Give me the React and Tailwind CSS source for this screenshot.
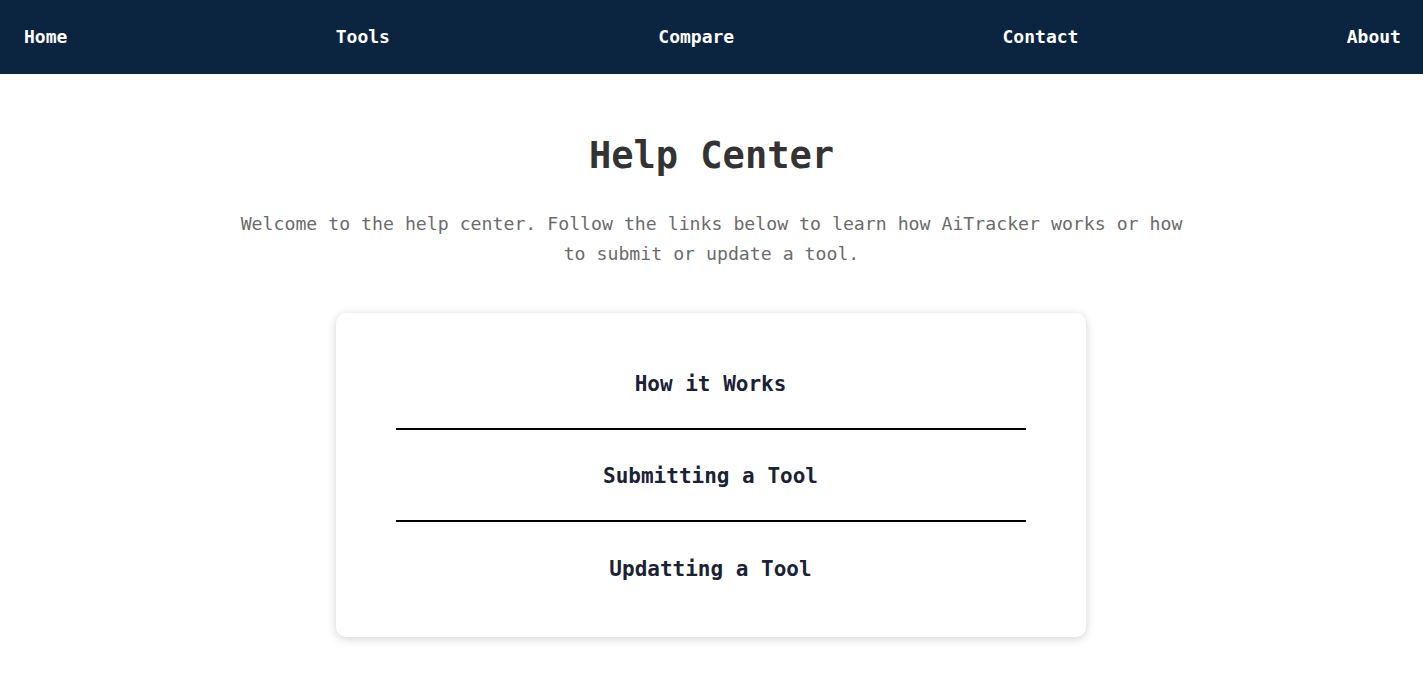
import React from "react";

const links = ["Home", "Tools", "Compare", "Contact", "About"];
const topics = ["How it Works", "Submitting a Tool", "Updatting a Tool"];

export default function App() {
  return (
    <div className="min-h-screen bg-white font-['DejaVu_Sans_Mono',monospace]">
      <nav className="h-[74px] bg-[#0b2541] flex items-center justify-between pl-6 pr-[22px] pb-[2px]">
        {links.map((link) => (
          <a key={link} href="#" className="text-white text-[18px] font-bold">
            {link}
          </a>
        ))}
      </nav>

      <main className="flex flex-col items-center">
        <h1 className="mt-[58px] text-[37px] leading-[48px] font-bold text-[#333333]">
          Help Center
        </h1>
        <p className="mt-[29px] max-w-[960px] text-center text-[18.2px] leading-[30px] text-[#6b6b6b]">
          Welcome to the help center. Follow the links below to learn how
          AiTracker works or how to submit or update a tool.
        </p>

        <div className="mt-[44px] mr-[2px] w-[750px] bg-white rounded-[10px] shadow-[0_2px_10px_rgba(0,0,0,0.18)] py-[25px] px-[60px]">
          {topics.map((topic, index) => (
            <div
              key={topic}
              className={
                index < topics.length - 1
                  ? "h-[92px] pt-[4px] flex items-center justify-center border-b-2 border-black"
                  : "h-[90px] pt-[5px] flex items-center justify-center"
              }
            >
              <a href="#" className="text-[21px] font-bold text-[#1b2236]">
                {topic}
              </a>
            </div>
          ))}
        </div>
      </main>
    </div>
  );
}
